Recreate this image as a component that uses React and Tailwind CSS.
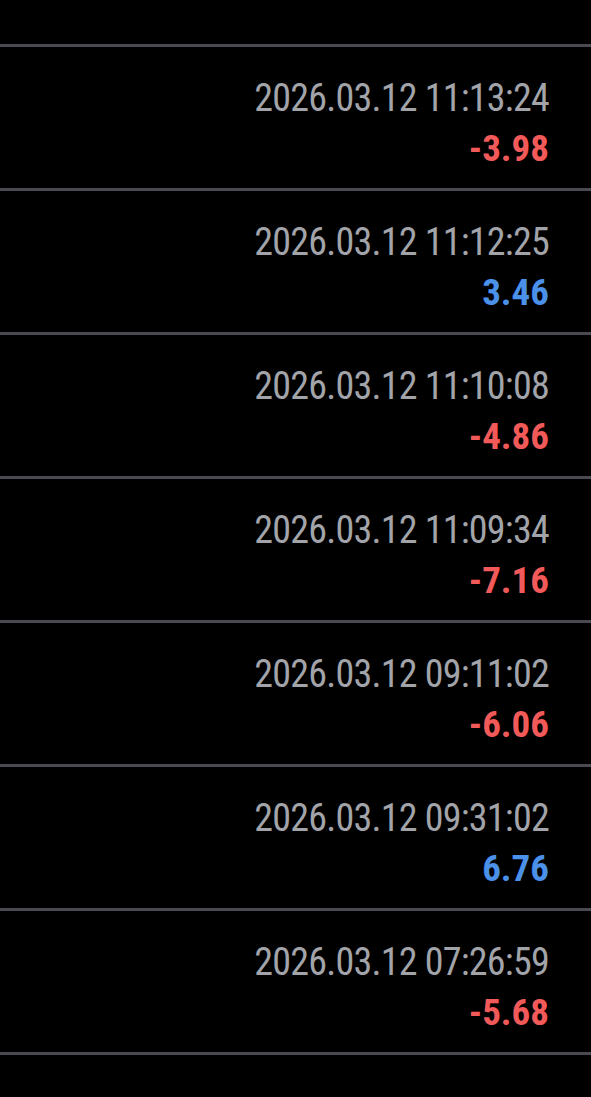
const rows = [
  ["2026.03.12 11:13:24", "-3.98", "neg"],
  ["2026.03.12 11:12:25", "3.46", "pos"],
  ["2026.03.12 11:10:08", "-4.86", "neg"],
  ["2026.03.12 11:09:34", "-7.16", "neg"],
  ["2026.03.12 09:11:02", "-6.06", "neg"],
  ["2026.03.12 09:31:02", "6.76", "pos"],
  ["2026.03.12 07:26:59", "-5.68", "neg"],
];

export default function App() {
  return (
    <div className="w-[591px] h-[1097px] bg-black overflow-hidden" style={{ fontFamily: "Roboto, 'Liberation Sans', sans-serif" }}>
      <div className="h-[44px]" />
      <div className="border-t-[3px] border-[#4a4a52]">
        {rows.map(([d, v, k], i) => (
          <div key={i} className="h-[144px] border-b-[3px] border-[#4a4a52] flex flex-col items-end pr-[42px] pt-[28px]">
            <div className="text-[38px] leading-[46px] tracking-[-0.75px] text-[#a2a4aa]" style={{ fontStretch: "75%" }}>{d}</div>
            <div className={"mt-[6px] text-[37px] leading-[44px] font-bold " + (k === "neg" ? "text-[#f25a5a]" : "text-[#4b91ea]")} style={{ fontStretch: "75%" }}>{v}</div>
          </div>
        ))}
      </div>
    </div>
  );
}
